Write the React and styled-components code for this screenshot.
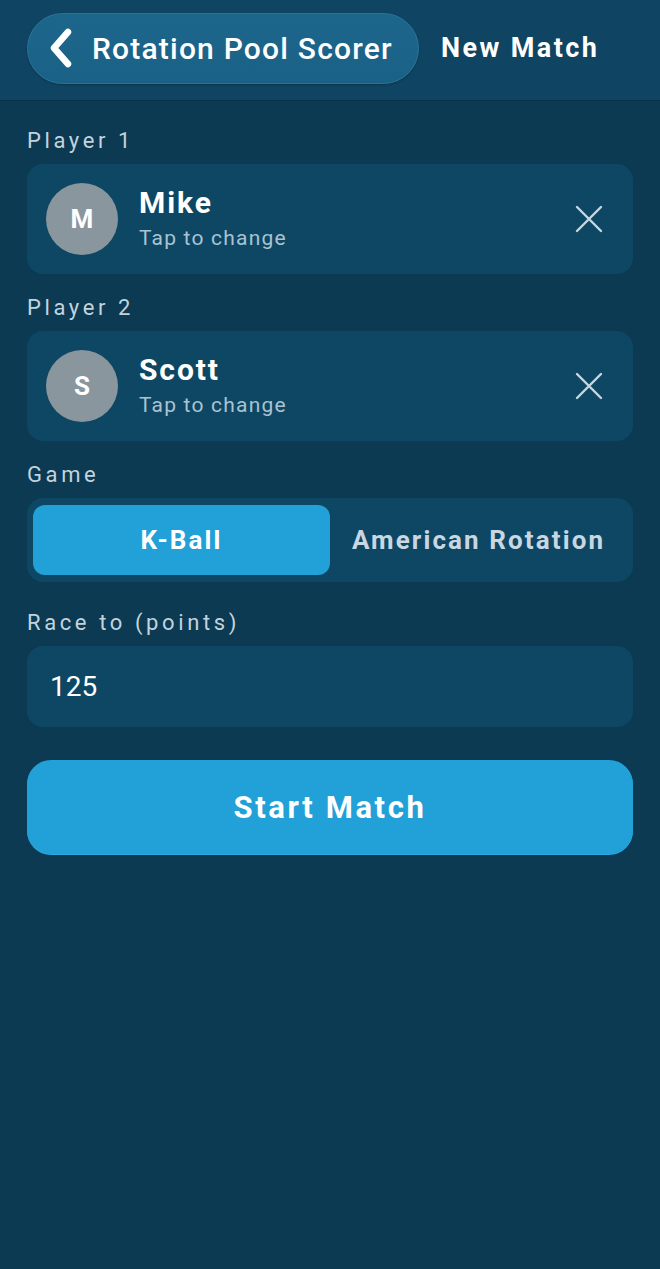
import React from "react";
import styled, { createGlobalStyle } from "styled-components";

const Global = createGlobalStyle`
  html, body { margin: 0; padding: 0; background: #0b3a52; }
  body { font-family: Roboto, "Noto Sans", "Liberation Sans", sans-serif; -webkit-font-smoothing: antialiased; }
  * { box-sizing: border-box; }
`;

const Page = styled.div`
  min-height: 1269px;
  background: #0b3a52;
  color: #fff;
`;

const Header = styled.header`
  height: 101px;
  background: #0f4562;
  border-bottom: 1px solid #0a3349;
  display: flex;
  align-items: center;
  padding: 0 27px;
  gap: 22px;
`;

const BackPill = styled.button`
  height: 71px;
  width: 392px;
  margin-top: -4px;
  border-radius: 36px;
  background: linear-gradient(180deg, #1d668b 0%, #1a6186 100%);
  border: 1px solid #2a7398;
  box-shadow: 0 1px 2px rgba(0,0,0,0.25);
  display: flex;
  align-items: center;
  gap: 18px;
  padding: 0 0 0 20px;
  color: #fff;
  font-family: inherit;
  font-size: 30px;
  font-weight: 500;
  letter-spacing: 1.2px;
  white-space: nowrap;
`;

const Title = styled.div`
  margin-top: -4px;
  font-size: 27px;
  font-weight: 700;
  letter-spacing: 2.4px;
  color: #fff;
`;

const Main = styled.main`
  padding: 27px 27px 0;
  display: flex;
  flex-direction: column;
`;

const Label = styled.div`
  font-size: 22px;
  letter-spacing: 3.6px;
  color: #c3d3de;
  line-height: 26px;
  margin-bottom: 10px;
`;

const Card = styled.div`
  height: 110px;
  border-radius: 16px;
  background: #0e4763;
  display: flex;
  align-items: center;
  padding: 0 20px 0 19px;
  margin-bottom: 21px;
`;

const Avatar = styled.div`
  width: 72px;
  height: 72px;
  border-radius: 50%;
  background: #8a969e;
  display: flex;
  align-items: center;
  justify-content: center;
  font-size: 26px;
  font-weight: 700;
  color: #fff;
  flex-shrink: 0;
`;

const Info = styled.div`
  flex: 1;
  margin-left: 21px;
  display: flex;
  flex-direction: column;
  margin-top: -2px;
`;

const Name = styled.div`
  font-size: 30px;
  font-weight: 700;
  letter-spacing: 1.9px;
  line-height: 36px;
`;

const Sub = styled.div`
  font-size: 21px;
  letter-spacing: 1.2px;
  color: #a9c3d2;
  line-height: 26px;
  margin-top: 4px;
`;

const CloseBtn = styled.div`
  width: 40px;
  height: 40px;
  display: flex;
  align-items: center;
  justify-content: center;
  margin-right: 4px;
`;

const Segment = styled.div`
  height: 84px;
  border-radius: 16px;
  background: #0e4763;
  padding: 7px 6px;
  display: grid;
  grid-template-columns: 1fr 1fr;
  margin-bottom: 28px;
`;

const SegItem = styled.div`
  border-radius: 12px;
  background: ${p => (p.$active ? "#22a0d8" : "transparent")};
  color: ${p => (p.$active ? "#fff" : "#c8d7e2")};
  display: flex;
  align-items: center;
  justify-content: center;
  font-size: 26px;
  font-weight: 700;
  letter-spacing: 2.1px;
  white-space: nowrap;
`;

const Input = styled.div`
  height: 81px;
  border-radius: 16px;
  background: #0e4763;
  display: flex;
  align-items: center;
  padding: 0 23px;
  font-size: 28px;
  color: #fff;
  margin-bottom: 33px;
`;

const StartButton = styled.button`
  height: 94px;
  border: none;
  border-radius: 24px;
  background: #22a0d8;
  box-shadow: 0 1px 0 #2aa9e2;
  color: #fff;
  font-family: inherit;
  font-size: 31px;
  font-weight: 700;
  letter-spacing: 2.6px;
`;

const Chevron = () => (
  <svg width="26" height="40" viewBox="0 0 26 40">
    <path d="M20 4 L6 20 L20 36" fill="none" stroke="#fff" strokeWidth="6.5" strokeLinecap="round" strokeLinejoin="round" />
  </svg>
);

const XIcon = () => (
  <svg width="28" height="28" viewBox="0 0 28 28">
    <path d="M2 2 L26 26 M26 2 L2 26" stroke="#c6d8e2" strokeWidth="2.4" strokeLinecap="round" />
  </svg>
);

const PlayerCard = ({ name }) => (
  <Card>
    <Avatar>{name[0]}</Avatar>
    <Info>
      <Name>{name}</Name>
      <Sub>Tap to change</Sub>
    </Info>
    <CloseBtn>
      <XIcon />
    </CloseBtn>
  </Card>
);

export default function App() {
  return (
    <Page>
      <Global />
      <Header>
        <BackPill>
          <Chevron />
          Rotation Pool Scorer
        </BackPill>
        <Title>New Match</Title>
      </Header>
      <Main>
        <Label>Player 1</Label>
        <PlayerCard name="Mike" />
        <Label>Player 2</Label>
        <PlayerCard name="Scott" />
        <Label>Game</Label>
        <Segment>
          <SegItem $active>K-Ball</SegItem>
          <SegItem>American Rotation</SegItem>
        </Segment>
        <Label>Race to (points)</Label>
        <Input>125</Input>
        <StartButton>Start Match</StartButton>
      </Main>
    </Page>
  );
}
